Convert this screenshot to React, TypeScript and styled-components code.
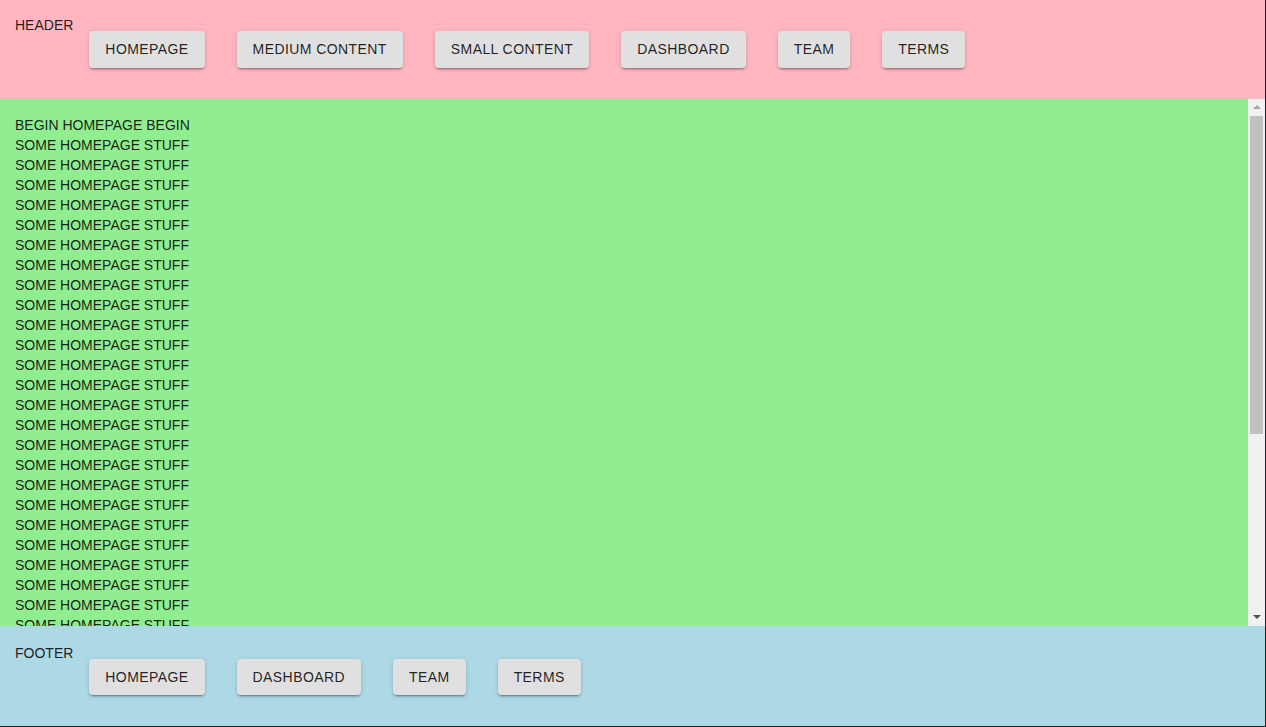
import React from "react";
import styled, { createGlobalStyle } from "styled-components";

const GlobalStyle = createGlobalStyle`
  html, body {
    margin: 0;
    padding: 0;
    background: #202124;
  }
  body {
    font-family: "Liberation Sans", Arial, Helvetica, sans-serif;
    font-size: 14px;
    line-height: 20px;
    color: rgba(0, 0, 0, 0.87);
  }
`;

const Frame = styled.div`
  display: flex;
  flex-direction: column;
  width: calc(100vw - 1px);
  height: calc(100vh - 1px);
  overflow: hidden;
`;

const Bar = styled.header<{ $bg: string; $top: number }>`
  flex: none;
  display: flex;
  align-items: flex-start;
  padding: ${(p) => p.$top}px 15px 15px 15px;
  background: ${(p) => p.$bg};
`;

const Label = styled.span`
  font-size: 14px;
  line-height: 20px;
  color: rgba(0, 0, 0, 0.87);
`;

const Nav = styled.nav`
  display: flex;
  align-items: flex-start;
`;

const NavButton = styled.button`
  margin: 16px;
  padding: 6px 16px;
  min-width: 64px;
  border: 0;
  border-radius: 4px;
  background: #e0e0e0;
  color: rgba(0, 0, 0, 0.87);
  font-family: "Liberation Sans", Arial, Helvetica, sans-serif;
  font-size: 14px;
  font-weight: 400;
  line-height: 1.75;
  letter-spacing: 0.03em;
  text-transform: uppercase;
  cursor: pointer;
  box-shadow: 0px 3px 1px -2px rgba(0, 0, 0, 0.2),
    0px 2px 2px 0px rgba(0, 0, 0, 0.14), 0px 1px 5px 0px rgba(0, 0, 0, 0.12);
`;

const Main = styled.main`
  flex: 1;
  min-height: 0;
  display: flex;
  background: #90ee90;
`;

const Content = styled.div`
  flex: 1;
  min-width: 0;
  overflow-y: auto;
  scrollbar-width: none;
  padding: 16px 15px;
  box-sizing: border-box;
  &::-webkit-scrollbar {
    display: none;
  }
`;

const Scrollbar = styled.div`
  flex: none;
  width: 17px;
  display: flex;
  flex-direction: column;
  background: #f1f1f1;
`;

const ArrowButton = styled.div`
  flex: none;
  height: 17px;
  display: flex;
  align-items: center;
  justify-content: center;
`;

const Thumb = styled.div<{ $h: number }>`
  flex: none;
  height: ${(p) => p.$h}px;
  margin: 0 2px;
  background: #c1c1c1;
`;

const TrackRest = styled.div`
  flex: 1;
`;

const Line = styled.div`
  font-size: 14px;
  line-height: 20px;
  white-space: nowrap;
`;

const headerLinks = [
  "Homepage",
  "Medium Content",
  "Small Content",
  "Dashboard",
  "Team",
  "Terms",
];
const footerLinks = ["Homepage", "Dashboard", "Team", "Terms"];

const Up = () => (
  <svg width="8" height="4" viewBox="0 0 8 4">
    <path d="M0 4 L4 0 L8 4 Z" fill="#a3a3a3" />
  </svg>
);
const Down = () => (
  <svg width="8" height="4" viewBox="0 0 8 4">
    <path d="M0 0 L8 0 L4 4 Z" fill="#505050" />
  </svg>
);

export default function App() {
  const stuff = Array.from({ length: 37 }, (_, i) => i);
  return (
    <>
      <GlobalStyle />
      <Frame>
        <Bar $bg="#ffb6c1" $top={15}>
          <Label>HEADER</Label>
          <Nav>
            {headerLinks.map((l) => (
              <NavButton key={l}>{l}</NavButton>
            ))}
          </Nav>
        </Bar>
        <Main>
          <Content>
            <Line>BEGIN HOMEPAGE BEGIN</Line>
            {stuff.map((i) => (
              <Line key={i}>SOME HOMEPAGE STUFF</Line>
            ))}
            <Line>END HOMEPAGE END</Line>
          </Content>
          <Scrollbar>
            <ArrowButton>
              <Up />
            </ArrowButton>
            <Thumb $h={318} />
            <TrackRest />
            <ArrowButton>
              <Down />
            </ArrowButton>
          </Scrollbar>
        </Main>
        <Bar as="footer" $bg="#add8e6" $top={17}>
          <Label>FOOTER</Label>
          <Nav>
            {footerLinks.map((l) => (
              <NavButton key={l}>{l}</NavButton>
            ))}
          </Nav>
        </Bar>
      </Frame>
    </>
  );
}
